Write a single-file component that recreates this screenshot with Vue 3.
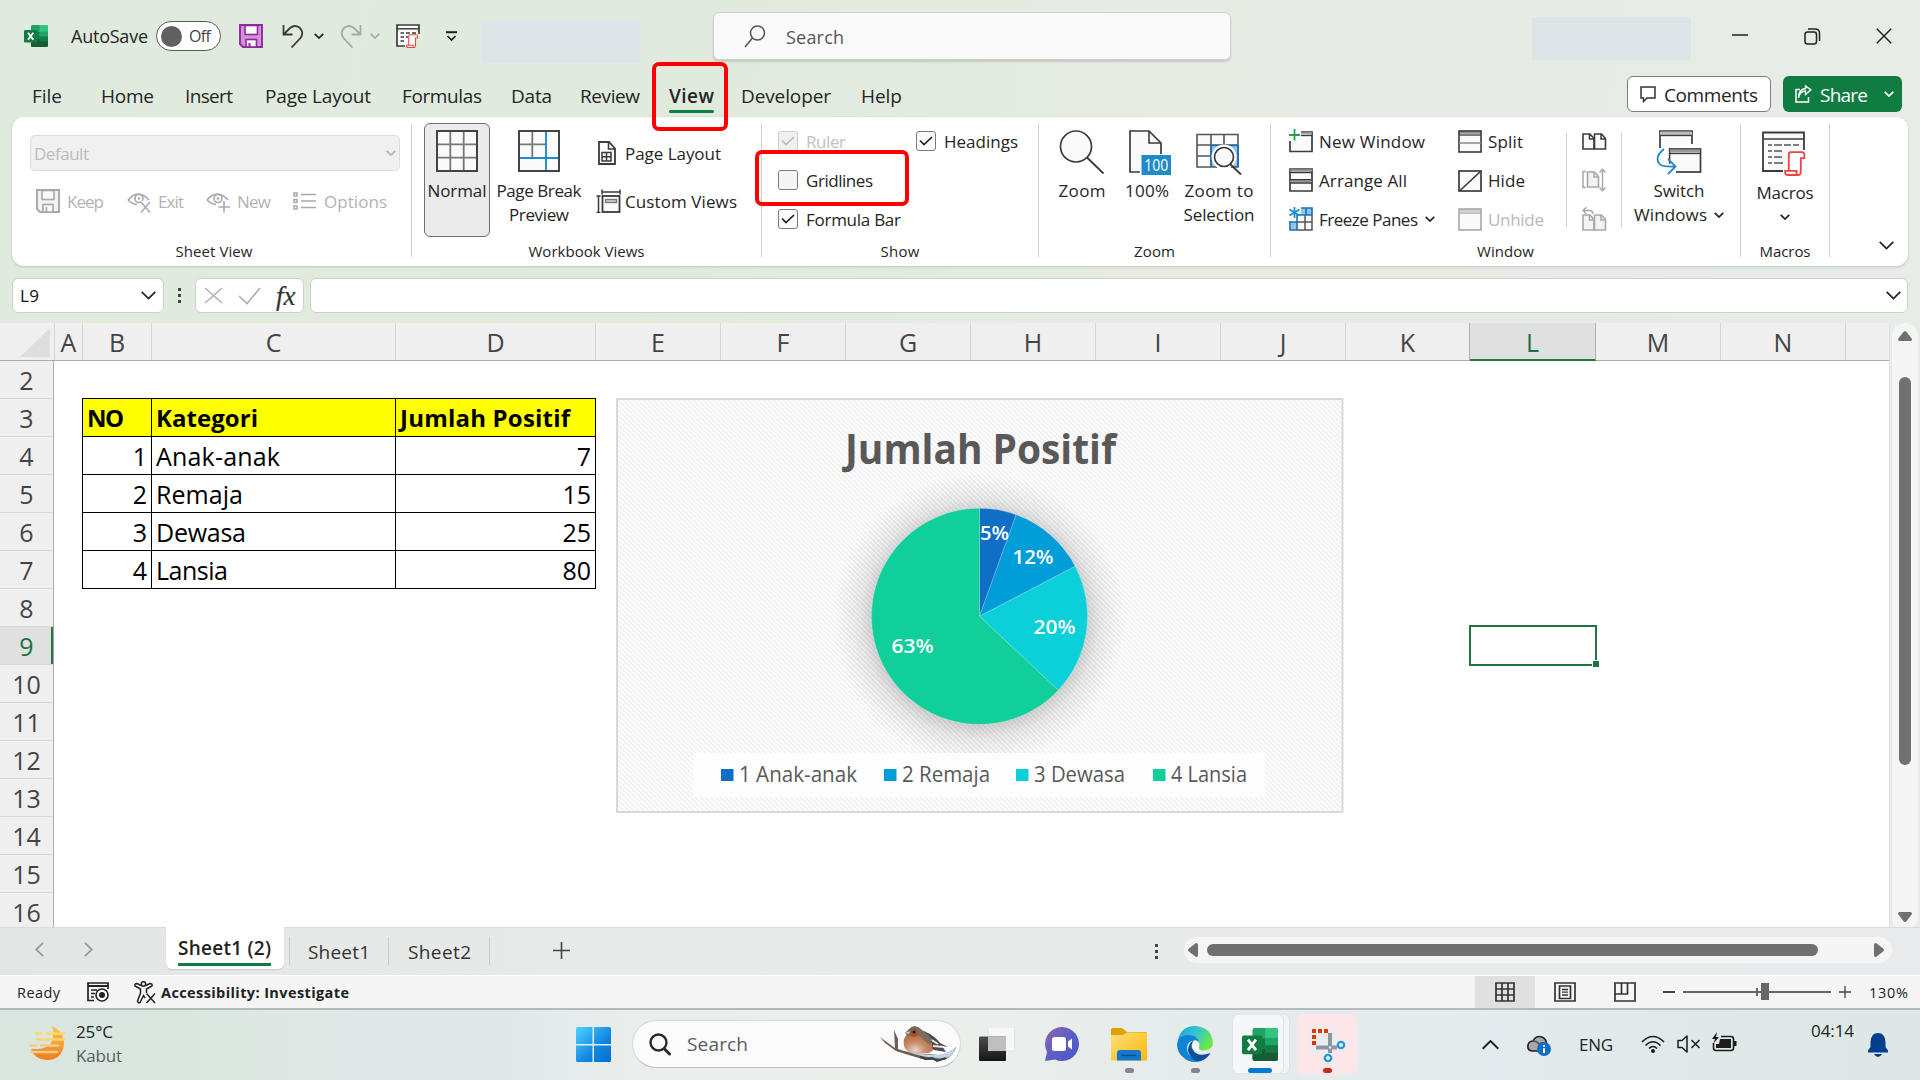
<script setup>
import { h } from 'vue'

// Stretches or tightens a label so that it takes exactly the given width.
const vFit = {
  mounted(el, { value }) {
    el.style.display = 'inline-block'
    el.style.whiteSpace = 'nowrap'
    const natural = el.getBoundingClientRect().width
    const count = Math.max(1, el.textContent.length - 1)
    el.style.letterSpacing = ((value - natural) / count).toFixed(3) + 'px'
    el.style.width = value + 'px'
  }
}

const K = '#3b3b3b'
const G = '#a8a8a8'
const excel = (gradient) => `
  <rect x="7" y="1" width="17" height="22" rx="1.5" fill="#21a366"/>
  <path d="M15.5 1H22.5A1.5 1.5 0 0 1 24 2.500V8H15.500Z" fill="#33c481"/>
  <rect x="7" y="8" width="8.500" height="7" fill="#107c41"/><rect x="15.500" y="7.500" width="8.500" height="7.500" fill="#21a366"/>
  <path d="M7 15H24V21.500A1.500 1.500 0 0 1 22.500 23H8.500A1.500 1.500 0 0 1 7 21.500Z" fill="#185c37"/><rect x="15.500" y="12.500" width="8.500" height="5" fill="#107c41"/>
  <rect x="0" y="6" width="13.500" height="12.500" rx="1.300" fill="${gradient}"/>
  <path d="M4 8.800L9.300 15.800M9.300 8.800L4 15.800" stroke="#fff" stroke-width="1.900"/>`
const scroll = (x, y, s) => `<g transform="translate(${x} ${y}) scale(${s})" fill="#fff" stroke="#f04040" stroke-width="1.500"><path d="M5 1H15Q17 1 17 3.500V6H14V17Q14 20 11.500 20H4V3Q4 1 6 1"/><path d="M1 16.500H10.500V18.500Q10.500 20 11.500 20H3Q1 20 1 18Z"/></g>`
const eye = (c) => `<g fill="none" stroke="${c}" stroke-width="1.600"><path d="M1 11Q11 -1 22 11"/><path d="M1 11Q5 15 10 15.500"/><circle cx="12" cy="9.500" r="4"/></g><circle cx="12" cy="9.500" r="1.300" fill="${c}"/>`
const page = (x, y, c, f) => `<path d="M${x} ${y}H${x + 7}L${x + 11} ${y + 4.500}V${y + 15}H${x}Z" fill="${f}" stroke="${c}" stroke-width="1.600"/><path d="M${x + 6.500} ${y}V${y + 5}H${x + 11}" fill="none" stroke="${c}" stroke-width="1.500"/>`
const win = (c, inner) => `<rect x="1" y="1" width="22" height="21" fill="#fafafa" stroke="${c}" stroke-width="1.600"/><path d="M1 2.500H23" stroke="${c}" stroke-width="2.500" opacity=".55"/><path d="M1 5H23" stroke="${c}" stroke-width="1.300"/>${inner}`

const icons = {
  excel: excel('#107c41'),
  save: '<path d="M1 1H23V23H4L1 20Z" fill="#d490dc" stroke="#8f2a9e" stroke-width="1.900"/><rect x="6" y="1.500" width="12.500" height="9" fill="#fafafa" stroke="#8f2a9e" stroke-width="1.600"/><rect x="7" y="15.500" width="10.500" height="7.500" fill="#fafafa" stroke="#8f2a9e" stroke-width="1.600"/><path d="M10.500 19V23" stroke="#8f2a9e" stroke-width="2"/>',
  undo: `<path d="M1.500 1V10.500H10.500M2 10L8 4Q12.500 .2 17.500 3.500Q22.500 8.500 18.500 14L9.500 23.500" fill="none" stroke="${K}" stroke-width="1.800"/>`,
  redo: '<path d="M21.500 1V10.500H12.500M21 10L15 4Q10.500 .2 5.500 3.500Q.5 8.500 4.500 14L13.500 23.500" fill="none" stroke="#a5aba5" stroke-width="1.800"/>',
  macroSmall: `<path d="M23 10V1H1V22H9" fill="#fafafa" stroke="${K}" stroke-width="1.700"/><path d="M1 4.800H23" stroke="${K}" stroke-width="1.500"/><path d="M4.500 9H8M10 9H14M16 9H20M4.500 13H8M10 13H12M4.500 17H8" stroke="${K}" stroke-width="1.500"/>${scroll(10, 10, 0.68)}`,
  customize: '<path d="M0 1.200H11" stroke="#222" stroke-width="2"/><path d="M1.500 5L5.500 9L9.500 5" fill="none" stroke="#222" stroke-width="1.700"/>',
  search: '<circle cx="13.500" cy="8" r="7" fill="none" stroke="#555" stroke-width="1.500"/><path d="M8.500 13L1 22" stroke="#555" stroke-width="1.600"/>',
  min: '<path d="M0 8H16" stroke="#222" stroke-width="1.500"/>',
  restore: '<rect x="1" y="4" width="11.500" height="12" rx="2.500" fill="none" stroke="#222" stroke-width="1.500"/><path d="M4 1H11Q15.500 1 15.500 5V13" fill="none" stroke="#222" stroke-width="1.500"/>',
  close: '<path d="M.8 .8L15.200 15.200M15.200 .8L.8 15.200" stroke="#222" stroke-width="1.500"/>',
  comment: '<path d="M1 1H15V12H7L3.500 15.500V12H1Z" fill="none" stroke="#333" stroke-width="1.500"/>',
  share: '<path d="M5 4.500H1V17H13.500V12" fill="none" stroke="#fff" stroke-width="1.500"/><path d="M3.500 13Q4.500 6.500 10.500 6V9.500L16 4.800L10.500 1V3.500Q3.500 4.500 3.500 13Z" fill="none" stroke="#fff" stroke-width="1.400"/>',
  keep: `<path d="M1 1H23V23H4L1 20Z" fill="#f3f3f3" stroke="${G}" stroke-width="1.900"/><rect x="6" y="1.500" width="12" height="9" fill="#fafafa" stroke="${G}" stroke-width="1.600"/><rect x="7" y="15.500" width="10" height="7.500" fill="#fafafa" stroke="${G}" stroke-width="1.600"/><path d="M10.500 18V23" stroke="${G}" stroke-width="1.600"/>`,
  exit: eye(G) + '<path d="M14 12H24V24H14Z" fill="#fff"/><path d="M14 13L23 23.500M23 13L14 23.500" stroke="#a8a8a8" stroke-width="1.500"/>',
  newView: eye(G) + '<path d="M15 13H24V24H15Z" fill="#fff"/><path d="M18 12V23.500M12.500 18H24" stroke="#a8a8a8" stroke-width="1.600"/>',
  options: `<g fill="none" stroke="${G}" stroke-width="1.500"><rect x="1" y="4" width="3" height="3"/><rect x="1" y="10.500" width="3" height="3"/><rect x="1" y="17" width="3" height="3"/><path d="M8 5.500H23M8 12H23M8 18.500H23"/></g>`,
  normal: `<rect x="1" y="1" width="40" height="40" fill="#fafafa" stroke="${K}" stroke-width="1.900"/><path d="M14.300 2V40M27.700 2V40M2 14.300H40M2 27.700H40" stroke="#777" stroke-width="1.800"/>`,
  pageBreak: `<rect x="1" y="1" width="40" height="40" fill="#fafafa" stroke="${K}" stroke-width="1.900"/><path d="M14.300 2V27.500M2 14.300H27.500" stroke="#777" stroke-width="1.800"/><path d="M28 2V40M2 28H40" stroke="#1e8bcd" stroke-width="1.900"/>`,
  pageLayout: `<path d="M1 1H11L17 7.500V23H1Z" fill="#fafafa" stroke="${K}" stroke-width="1.800"/><path d="M10.500 1V8H17" fill="none" stroke="${K}" stroke-width="1.500"/><path d="M4 11.500H13V20H4ZM8.500 11.500V20M4 15.700H13" fill="none" stroke="${K}" stroke-width="1.500"/>`,
  customViews: `<rect x="6.500" y="7" width="17" height="16" fill="#fafafa" stroke="${K}" stroke-width="1.800"/><rect x="9.500" y="10.500" width="11" height="3" fill="#ccc" stroke="#777" stroke-width="1.300"/><path d="M6 3H24M6 .5V5.500M24 .5V5.500M2.500 7V23.500M.5 7H4.500M.5 23.500H4.500" stroke="${K}" stroke-width="1.500"/>`,
  zoom: `<circle cx="17" cy="16.500" r="15.500" fill="#fafafa" stroke="${K}" stroke-width="1.700"/><path d="M28 27.500L44.500 43.500" stroke="${K}" stroke-width="1.800"/>`,
  hundred: `<path d="M1 1H20L32 13V42H1Z" fill="#fafafa" stroke="${K}" stroke-width="1.700"/><path d="M20 1V13H32" fill="none" stroke="${K}" stroke-width="1.600"/><rect x="11" y="24" width="32" height="21" fill="#fff"/><rect x="12.500" y="25" width="29.500" height="20" fill="#1e8bcd"/><text x="27.300" y="40.500" text-anchor="middle" font-family="Open Sans, sans-serif" font-size="15.500" textLength="24" lengthAdjust="spacingAndGlyphs" fill="#fff">100</text>`,
  zoomSel: `<path d="M1 2H42V34H1Z" fill="#fafafa"/><rect x="15" y="13" width="27" height="21" fill="#8ec6ee"/><path d="M1 1.500H42V34H1ZM1 12H42M1 23H15M15 2V34M28 2V12" fill="none" stroke="#555" stroke-width="1.600"/><path d="M15 34V12.500H42V34" fill="none" stroke="#1e70b8" stroke-width="1.600"/><circle cx="28" cy="24" r="12.500" fill="#fff"/><circle cx="28" cy="24" r="9.500" fill="#fafafa" stroke="${K}" stroke-width="1.700"/><path d="M34 31L45 41.500" stroke="${K}" stroke-width="1.900"/>`,
  newWin: `<path d="M12 3H23V22.500H1V12" fill="#fafafa" stroke="${K}" stroke-width="1.700"/><path d="M12 4.500H23" stroke="#aaa" stroke-width="2"/><path d="M12 6.500H23" stroke="${K}" stroke-width="1.300"/><path d="M5.500 0V11.500M0 6H11" stroke="#2a9d48" stroke-width="1.800"/>`,
  arrange: `<path d="M1 1H23V23H1Z" fill="#fafafa" stroke="${K}" stroke-width="1.700"/><path d="M1 2.500H23M1 13.500H23" stroke="#999" stroke-width="2"/><path d="M1 4.500H23M1 11.700H23M1 15H23" stroke="${K}" stroke-width="1.400"/>`,
  freeze: `<path d="M1 1H23V23H1Z" fill="#fafafa"/><path d="M12 1H23V8H12ZM1 15H8V23H1Z" fill="#8ec6ee"/><path d="M8 23H23V8M16 8V23M8 15H23" fill="none" stroke="#555" stroke-width="1.500"/><path d="M12 1H23V8H8V23H1V14M17 1V8M1 15H8" fill="none" stroke="#1e70b8" stroke-width="1.600"/><path d="M5.500 0V11M.5 2.500L10.500 8.500M10.500 2.500L.5 8.500" stroke="#1e8bcd" stroke-width="1.700"/>`,
  split: win(K, `<path d="M1 13H23" stroke="#888" stroke-width="1.500"/>`),
  hide: `<rect x="1" y="2" width="22" height="20" fill="#fafafa" stroke="${K}" stroke-width="1.700"/><path d="M2 21.500L22.500 2.500" stroke="${K}" stroke-width="1.700"/>`,
  unhide: win(G, ''),
  sideBySide: `<g transform="translate(0 4)">${page(1, 1, K, '#fafafa')}${page(12.500, 1, K, '#fafafa')}</g>`,
  sync: `<path d="M4 3.500H1V19.500H4" fill="none" stroke="${G}" stroke-width="1.500"/><g transform="translate(4.500 3)">${page(1, 1, G, '#f3f3f3')}</g><path d="M20.500 1.500V22.500M17.500 4.500L20.500 1.200L23.500 4.500M17.500 19.500L20.500 22.800L23.500 19.500" fill="none" stroke="${G}" stroke-width="1.400"/>`,
  reset: `<g transform="translate(0 8)">${page(1, 0, G, '#f3f3f3')}${page(12.500, 0, G, '#f3f3f3')}</g><path d="M4.500 0L1 3.500L4.500 7M1 3.500H7Q11 3.500 11 7" fill="none" stroke="${G}" stroke-width="1.400"/>`,
  switchWin: `<path d="M4 18V1H36V14" fill="#fafafa" stroke="${K}" stroke-width="1.700"/><path d="M4 3.500H36" stroke="#bbb" stroke-width="3.500"/><path d="M4 5.500H36" stroke="${K}" stroke-width="1.300"/><rect x="13.500" y="19" width="31" height="23" fill="#fafafa" stroke="${K}" stroke-width="1.700"/><path d="M14 21H44" stroke="#999" stroke-width="3"/><path d="M14 23.500H44" stroke="${K}" stroke-width="1.300"/><path d="M0 19H12.500V33L20 38V44H0Z" fill="#fff"/><path d="M8 19Q-2 27 3.500 34Q6 37 19 36.500M12 29L19.500 36.500L12 44" fill="none" stroke="#1e8bcd" stroke-width="1.800"/>`,
  macros: `<path d="M42 19V1.500H1V40H21" fill="#fafafa" stroke="${K}" stroke-width="1.800"/><path d="M1 8H42" stroke="${K}" stroke-width="1.600"/><path d="M6 14H10M12 14H20M22 14H29M31 14H37M6 20H10M12 20H20M6 26H10M12 26H20M6 32H10M12 32H21" stroke="#555" stroke-width="1.500"/>${scroll(22, 20, 1.200)}`,
  cancel: '<path d="M1 1L18 16M18 1L1 16" stroke="#b0b0b0" stroke-width="1.500"/>',
  ok: '<path d="M1 9L9 16.500L22 1" fill="none" stroke="#b0b0b0" stroke-width="1.600"/>',
  record: `<path d="M7 18.500H1V1H21V7" fill="none" stroke="#222" stroke-width="1.700"/><path d="M1 4H21" stroke="#222" stroke-width="2"/><path d="M4 8H10M4 11.500H8M4 15H7" stroke="#222" stroke-width="1.300"/><circle cx="15" cy="13" r="6" fill="#fff" stroke="#222" stroke-width="1.600"/><circle cx="15" cy="13" r="3" fill="#222"/>`,
  access: `<g fill="none" stroke="#222" stroke-width="1.500"><circle cx="9.500" cy="3" r="2.200"/><path d="M7 4.500L3 2.500Q.5 2.500 1 5L6.500 8V12L3.500 20Q4 22.500 6 21.500L9.500 14.500L11 17M12 4.500L16 2.500Q18.500 2.500 18 5L12.500 8V12"/><path d="M12.500 12.500L21 22M21 12.500L12.500 22"/></g>`,
  viewNormal: '<path d="M1 1H19V19H1ZM7 1V19M13 1V19M1 7H19M1 13H19" fill="none" stroke="#333" stroke-width="1.700"/>',
  viewPage: '<path d="M1 1H21V19H1ZM5.500 4H16.500V16.500H5.500Z" fill="none" stroke="#333" stroke-width="1.700"/><path d="M8 7.500H14M8 10.200H14M8 13H14" stroke="#333" stroke-width="1.300"/>',
  viewBreak: '<path d="M1 1H21V19H1ZM1 12H13.500V1M7.500 1V12" fill="none" stroke="#333" stroke-width="1.700"/>',
  weather: '<defs><linearGradient id="moon" x1="0" y1="0" x2="0" y2="1"><stop offset="0" stop-color="#f7c65c"/><stop offset="1" stop-color="#ef7d19"/></linearGradient></defs><path d="M23 0Q36 7 35 18Q33 34 18 34Q6 34 2 23Q22 24 24 12Q25 6 23 0Z" fill="url(#moon)"/><g stroke="#fbd768" stroke-width="2.600" stroke-linecap="round"><path d="M7 7.500H12M18 7.500H35M8 13.500H35"/><path d="M1 19.500H7M12 19.500H29M2 26H28" stroke="#f7cb85"/></g>',
  start: '<defs><linearGradient id="win" x1="0" y1="0" x2="1" y2="1"><stop offset="0" stop-color="#4fd3ff"/><stop offset=".6" stop-color="#1287df"/><stop offset="1" stop-color="#0370d0"/></linearGradient></defs><path d="M1.500 0H16.500V17H0V1.500Q0 0 1.500 0ZM18 0H33.500Q35 0 35 1.500V17H18ZM0 18.500H16.500V35H1.500Q0 35 0 33.500ZM18 18.500H35V33.500Q35 35 33.500 35H18Z" fill="url(#win)"/>',
  find: '<circle cx="9.500" cy="9.500" r="8" fill="none" stroke="#2a2a2a" stroke-width="2.400"/><path d="M15.500 16L20.500 21" stroke="#2a2a2a" stroke-width="3" stroke-linecap="round"/>',
  bird: `<defs><radialGradient id="breast" cx=".4" cy=".85" r=".8"><stop offset="0" stop-color="#e9d5c8"/><stop offset=".45" stop-color="#c98a66"/><stop offset="1" stop-color="#a9623d"/></radialGradient></defs>
  <path d="M0 11L8 17L15 22L14 4L18 13V23Q32 28 46 28L60 29Q70 27 76 21Q74 30 64 34L46 34Q28 29 16 25L5 17Z" fill="#6d6154"/>
  <path d="M26 25Q40 29 58 29Q70 27 76 21L73 28Q66 34 58 32Q40 31 26 25Z" fill="#c3d3e4"/>
  <path d="M40 31L46 33L52 32L57 35L66 32" fill="none" stroke="#34414a" stroke-width="2"/>
  <path d="M44 5Q55 10 60 17L68 21L62 20L66 26L54 24L44 18Z" fill="#4b4a4e"/>
  <path d="M50 13L58 18M53 20L64 21" stroke="#e7e9ec" stroke-width="1.800"/>
  <path d="M24 13Q22 25 33 27Q50 29 53 24Q52 10 41 5L29 5Z" fill="url(#breast)"/>
  <path d="M28 6Q31 -1 38 1Q46 6 52 13L50 19Q44 15 40 10Z" fill="#7b6a60"/>
  <path d="M25 7L29 3Q33 -1 37 1L36 6L28 10Z" fill="#70675f"/><circle cx="34" cy="7" r="4" fill="#a1542d"/><circle cx="34" cy="6" r="1.500" fill="#141414"/><path d="M25 7L30 5L29 8Z" fill="#d0ccc8"/>`,
  taskView: '<defs><linearGradient id="tv" x1="0" y1="0" x2="0" y2="1"><stop offset="0" stop-color="#4d4d4d"/><stop offset="1" stop-color="#151515"/></linearGradient></defs><rect x="9" y="0" width="26.500" height="24" rx="1" fill="#f7f7f7" stroke="#dcdcdc" stroke-width=".7"/><rect x="0" y="9.500" width="27" height="24.500" rx="1" fill="url(#tv)"/><rect x="9" y="9.500" width="18" height="14.500" fill="#bfbfbf"/>',
  chat: '<defs><linearGradient id="ch" x1="0" y1="0" x2="1" y2="1"><stop offset="0" stop-color="#9265a8"/><stop offset=".5" stop-color="#5b5fc7"/><stop offset="1" stop-color="#5054c4"/></linearGradient></defs><path d="M17 0A17 17 0 1 1 10 32.500L0 34L2 25A17 17 0 0 1 17 0Z" fill="url(#ch)"/><rect x="7" y="10" width="14" height="14" rx="2.500" fill="#fff"/><path d="M23 14.500L27 11.500V22.500L23 19.500Z" fill="#fff"/>',
  folder: '<defs><linearGradient id="fo" x1="0" y1="0" x2="1" y2="1"><stop offset="0" stop-color="#ffdf78"/><stop offset="1" stop-color="#fab80c"/></linearGradient></defs><path d="M0 1.500Q0 0 1.500 0H11L16 4H34.500Q36 4 36 5.500V10H0Z" fill="#e0a008"/><path d="M0 7H12L16 4.500H36V32.500H0Z" fill="url(#fo)"/><path d="M6 32.500V25Q6 22 9 22H27Q30 22 30 25V32.500Z" fill="#1379ca"/><path d="M10.500 27.500H25.500" stroke="#0a4c8c" stroke-width="1.600"/>',
  edge: '<defs><linearGradient id="e1" x1="0" y1="0" x2="1" y2=".5"><stop offset="0" stop-color="#1ea0dd"/><stop offset=".5" stop-color="#32c3d6"/><stop offset="1" stop-color="#6be849"/></linearGradient></defs><path d="M1 14Q4 0 18 0Q34 1 36 16Q36 24 27 24.500Q20 24.500 22.500 20Q23 14 16 13Z" fill="url(#e1)"/><path d="M0 18Q1 9 11 9Q20 9 22 16Q12 12 10 21Q10 32 22 34Q26 35 24 35Q14 38 7 32Q0 27 0 18Z" fill="#0f84d6"/><path d="M14 16Q8 24 14 31Q18 36 24 35Q31 32 33.500 27Q20 32 15.500 23Q13 19 17 15Z" fill="#0d4f9a"/><path d="M18 14Q22 15 22 19Q20 24 25 25Q20 27 17 23Q13 18 18 14Z" fill="#f2f7f8"/>',
  snip: '<rect x="0" y="0" width="28" height="27" rx="3" fill="#ecebee"/><path d="M5 19V5H19" fill="none" stroke="#d83b01" stroke-width="4" stroke-dasharray="4 2"/><path d="M21 7V27M7 21.500H28" stroke="#8d97a1" stroke-width="4"/><circle cx="21" cy="21.500" r="1.300" fill="#e8e8e8"/><circle cx="32" cy="19" r="3.200" fill="none" stroke="#1b9de2" stroke-width="2.300"/><circle cx="19" cy="32" r="3.200" fill="none" stroke="#1b9de2" stroke-width="2.300"/>',
  cloud: '<path d="M5 16Q0 15 1 10Q2 6 6 6Q9 0 15 2Q19 4 19.500 8L11 16Z" fill="#a9a9a9" stroke="#222" stroke-width="1.600"/><path d="M6 6Q10 6 12 9Q16 7 19 8" fill="none" stroke="#555" stroke-width="1.500"/><circle cx="17" cy="14" r="7" fill="#0c6fc4"/><path d="M17 10V11.800M17 13.200V18" stroke="#fff" stroke-width="2"/>',
  wifi: '<g fill="none" stroke="#1c1c1c" stroke-width="1.600"><path d="M1 7Q12 -4 23 7M4.500 10.500Q12 3 19.500 10.500M8 13.500Q12 9.500 16 13.500"/></g><circle cx="12" cy="16" r="2" fill="#1c1c1c"/>',
  mute: '<path d="M1 5.500H5L10 1V17L5 12.500H1Z" fill="none" stroke="#1c1c1c" stroke-width="1.500" stroke-linejoin="round"/><path d="M14.500 5L22.500 13M22.500 5L14.500 13" stroke="#1c1c1c" stroke-width="1.500"/>',
  battery: '<path d="M9 4.500H19Q21.500 4.500 21.500 7V16Q21.500 18.500 19 18.500H4Q1.500 18.500 1.500 16V11" fill="none" stroke="#1c1c1c" stroke-width="1.600"/><path d="M8 7H19V16H4V12H7Z" fill="#1c1c1c"/><rect x="22" y="9" width="2.500" height="5" fill="#1c1c1c"/><path d="M5 0L0 7H3L1.500 11.500L7 5H4Z" fill="#1c1c1c"/>',
  bell: '<path d="M0 19.500V17.500L2.500 14V9Q3 0 10 0Q17 0 17.500 9V14L20 17.500V19.500Z" fill="#003f8f"/><path d="M6 21H14Q12.500 24 10 24Q7.500 24 6 21Z" fill="#003f8f"/>'
}

const Ico = (p) => h('svg', { width: p.w, height: p.h, viewBox: `0 0 ${p.w} ${p.h}`, innerHTML: icons[p.name] })
Ico.props = ['name', 'w', 'h']

const Chev = (p) => {
  const w = +p.w, t = +p.t || 1.7, ht = w / 2 + 1
  const d = p.up ? `M.7 ${ht - 0.8}L${w / 2} 1L${w - 0.7} ${ht - 0.8}` : `M.7 .8L${w / 2} ${ht - 1}L${w - 0.7} .8`
  return h('svg', { width: w, height: ht, viewBox: `0 0 ${w} ${ht}` }, [h('path', { d, fill: 'none', stroke: p.c || '#222', 'stroke-width': t })])
}
Chev.props = ['w', 'c', 't', 'up']

const tabs = [
  ['File', 32, 30], ['Home', 39, 53], ['Insert', 31, 48], ['Page Layout', 32, 106], ['Formulas', 31, 80], ['Data', 29, 41],
  ['Review', 28, 60], ['View', 29, 45], ['Developer', 27, 90], ['Help', 30, 41]
].map(([label, gap, width]) => ({ label, gap, width }))

const sheetView = [
  { icon: 'keep', label: 'Keep', w: 37, gap: 6 }, { icon: 'exit', label: 'Exit', w: 26, gap: 23 },
  { icon: 'newView', label: 'New', w: 34, gap: 22 }, { icon: 'options', label: 'Options', w: 63, gap: 22 }
]

const cols = [
  ['A', 28], ['B', 69], ['C', 244], ['D', 200], ['E', 125], ['F', 125], ['G', 125], ['H', 125], ['I', 125], ['J', 125],
  ['K', 124], ['L', 126], ['M', 125], ['N', 125], ['', 43.500]
]
const rows = [2, 3, 4, 5, 6, 7, 8, 9, 10, 11, 12, 13, 14, 15, 16]
const data = [['1', 'Anak-anak', '7'], ['2', 'Remaja', '15'], ['3', 'Dewasa', '25'], ['4', 'Lansia', '80']]
const nameWidths = [124, 87, 90, 72]

const values = [7, 15, 25, 80]
const colors = ['#0f6fc6', '#009dd9', '#0bd0d9', '#10cf9b']
const total = values.reduce((a, b) => a + b)
let acc = 0
const slices = values.map((v, i) => {
  const a = (acc / total) * 2 * Math.PI
  acc += v
  const b = (acc / total) * 2 * Math.PI
  const pt = (t) => `${(363.5 + 108 * Math.sin(t)).toFixed(2)} ${(218.3 - 108 * Math.cos(t)).toFixed(2)}`
  return { fill: colors[i], d: `M363.5 218.3L${pt(a)}A108 108 0 ${b - a > Math.PI ? 1 : 0} 1 ${pt(b)}Z` }
})
const pct = [['5%', 364, 141.500, 29], ['12%', 396.500, 165.500, 41], ['20%', 417.500, 235.500, 42], ['63%', 275.500, 255, 42]]
const legend = [['1 Anak-anak', 105, 118], ['2 Remaja', 268, 88], ['3 Dewasa', 400, 91], ['4 Lansia', 537, 76]]
</script>

<template>
  <div class="screen">
    <header class="titlebar">
      <Ico class="t-xl" name="excel" w="24" h="24" />
      <span class="t-auto" v-fit="77">AutoSave</span>
      <div class="toggle"><i></i><span v-fit="22">Off</span></div>
      <Ico class="t-save" name="save" w="24" h="24" />
      <Ico class="t-undo" name="undo" w="24" h="24" />
      <Chev class="t-c1" w="10" />
      <Ico class="t-redo" name="redo" w="24" h="24" />
      <Chev class="t-c2" w="10" c="#a5aba5" />
      <Ico class="t-mac" name="macroSmall" w="24" h="24" />
      <Ico class="t-cust" name="customize" w="11" h="11" />
      <div class="blank b1"></div>
      <div class="search"><Ico name="search" w="22" h="23" /><span v-fit="58">Search</span></div>
      <div class="blank b2"></div>
      <Ico class="w-min" name="min" w="16" h="16" />
      <Ico class="w-res" name="restore" w="17" h="17" />
      <Ico class="w-close" name="close" w="16" h="16" />
    </header>

    <nav class="tabs">
      <div v-for="t in tabs" :key="t.label" class="tab" :class="{ on: t.label === 'View' }" :style="{ marginLeft: t.gap + 'px' }">
        <span v-fit="t.width">{{ t.label }}</span>
        <i v-if="t.label === 'View'" class="mark"></i>
      </div>
      <div class="comments"><Ico name="comment" w="16" h="17" /><span v-fit="94">Comments</span></div>
      <div class="share"><Ico name="share" w="17" h="18" /><span v-fit="48">Share</span><Chev w="10" c="#fff" /></div>
    </nav>

    <section class="ribbon">
      <div class="group g1">
        <div class="body">
          <div class="combo"><span v-fit="55">Default</span><Chev w="10" c="#b5b5b5" /></div>
          <div class="sv-row">
            <div v-for="s in sheetView" :key="s.label" class="sv" :style="{ marginLeft: s.gap + 'px' }">
              <Ico :name="s.icon" w="24" h="24" /><span v-fit="s.w">{{ s.label }}</span>
            </div>
          </div>
        </div>
        <div class="cap"><span v-fit="77">Sheet View</span></div>
      </div>
      <i class="sep"></i>
      <div class="group g2">
        <div class="body row">
          <div class="big normal"><Ico name="normal" w="42" h="42" /><span v-fit="59">Normal</span></div>
          <div class="big pb"><Ico name="pageBreak" w="42" h="42" /><span v-fit="85">Page Break</span><span v-fit="60">Preview</span></div>
          <div class="stack2">
            <div><Ico class="pl" name="pageLayout" w="18" h="24" /><span v-fit="96">Page Layout</span></div>
            <div><Ico class="cv" name="customViews" w="25" h="24" /><span v-fit="112">Custom Views</span></div>
          </div>
        </div>
        <div class="cap"><span v-fit="116">Workbook Views</span></div>
      </div>
      <i class="sep"></i>
      <div class="group g3">
        <div class="body checks">
          <div class="chk off"><b><svg width="14" height="10"><path d="M1 4.500L5 8.500L13 1" fill="none" stroke="#bbb" stroke-width="1.700" /></svg></b><span v-fit="40">Ruler</span></div>
          <div class="chk"><b><svg width="14" height="10"><path d="M1 4.500L5 8.500L13 1" fill="none" stroke="#222" stroke-width="1.700" /></svg></b><span v-fit="74">Headings</span></div>
          <div class="chk empty"><b></b><span v-fit="67">Gridlines</span></div>
          <div></div>
          <div class="chk"><b><svg width="14" height="10"><path d="M1 4.500L5 8.500L13 1" fill="none" stroke="#222" stroke-width="1.700" /></svg></b><span v-fit="95">Formula Bar</span></div>
        </div>
        <div class="cap"><span v-fit="39">Show</span></div>
      </div>
      <i class="sep"></i>
      <div class="group g4">
        <div class="body row">
          <div class="big z1"><Ico name="zoom" w="46" h="45" /><span v-fit="47">Zoom</span></div>
          <div class="big z2"><Ico class="hun" name="hundred" w="43" h="45" /><span v-fit="44">100%</span></div>
          <div class="big z3"><Ico name="zoomSel" w="46" h="42" /><span v-fit="69">Zoom to</span><span v-fit="71">Selection</span></div>
        </div>
        <div class="cap"><span v-fit="41">Zoom</span></div>
      </div>
      <i class="sep"></i>
      <div class="group g5">
        <div class="body row">
          <div class="col c1">
            <div><Ico name="newWin" w="24" h="24" /><span v-fit="106">New Window</span></div>
            <div><Ico name="arrange" w="24" h="24" /><span v-fit="88">Arrange All</span></div>
            <div><Ico name="freeze" w="24" h="24" /><span v-fit="99">Freeze Panes</span><Chev class="sc" w="10" /></div>
          </div>
          <div class="col c2">
            <div><Ico name="split" w="24" h="23" /><span v-fit="35">Split</span></div>
            <div><Ico name="hide" w="24" h="23" /><span v-fit="37">Hide</span></div>
            <div class="dim"><Ico name="unhide" w="24" h="23" /><span v-fit="56">Unhide</span></div>
          </div>
          <i class="ssep"></i>
          <div class="col c3">
            <div><Ico name="sideBySide" w="25" h="24" /></div>
            <div><Ico name="sync" w="25" h="24" /></div>
            <div><Ico name="reset" w="25" h="24" /></div>
          </div>
          <i class="ssep after"></i>
          <div class="big sw"><Ico name="switchWin" w="46" h="45" /><span v-fit="51">Switch</span><div class="ln"><span v-fit="73">Windows</span><Chev w="10" /></div></div>
        </div>
        <div class="cap"><span v-fit="57">Window</span></div>
      </div>
      <i class="sep"></i>
      <div class="group g6">
        <div class="body row">
          <div class="big mc"><Ico name="macros" w="46" h="45" /><span v-fit="57">Macros</span><Chev class="mcc" w="10" /></div>
        </div>
        <div class="cap"><span v-fit="51">Macros</span></div>
      </div>
      <i class="sep"></i>
      <Chev class="collapse" w="15" />
    </section>

    <section class="fbar">
      <div class="name"><span v-fit="19">L9</span><Chev w="15" /></div>
      <div class="dots"><i></i><i></i><i></i></div>
      <div class="fx"><Ico name="cancel" w="19" h="17" /><Ico class="ok" name="ok" w="23" h="18" /><em>fx</em></div>
      <div class="formula"><Chev w="15" /></div>
    </section>

    <main class="sheet">
      <div class="grid">
        <div class="colhead">
          <div class="corner"><i></i></div>
          <div v-for="c in cols" :key="c[0]" class="ch" :class="{ sel: c[0] === 'L' }" :style="{ width: c[1] + 'px' }">{{ c[0] }}</div>
        </div>
        <div class="lower">
          <div class="rowhead">
            <div v-for="r in rows" :key="r" class="rh" :class="{ sel: r === 9 }">{{ r }}</div>
          </div>
          <div class="cells">
            <table>
              <tbody>
                <tr class="hd"><td class="k1"><span v-fit="37">NO</span></td><td class="k2"><span v-fit="102">Kategori</span></td><td class="k3"><span v-fit="170">Jumlah Positif</span></td></tr>
                <tr v-for="(d, i) in data" :key="d[0]"><td class="r">{{ d[0] }}</td><td><span v-fit="nameWidths[i]">{{ d[1] }}</span></td><td class="r">{{ d[2] }}</td></tr>
              </tbody>
            </table>
            <svg class="chart" width="728" height="416" viewBox="0 0 728 416">
              <defs>
                <pattern id="stripe" width="5" height="5" patternUnits="userSpaceOnUse">
                  <rect width="5" height="5" fill="#fff" />
                  <path d="M-1 -1L6 6M-1 4L1 6M4 -1L6 1" stroke="#eeeeee" stroke-width="1.500" />
                </pattern>
                <radialGradient id="halo"><stop offset=".7" stop-color="#000" stop-opacity=".2" /><stop offset=".82" stop-color="#000" stop-opacity=".08" /><stop offset="1" stop-color="#000" stop-opacity="0" /></radialGradient>
              </defs>
              <rect x="1" y="1" width="725.500" height="413" fill="url(#stripe)" stroke="#d9d9d9" stroke-width="2" />
              <circle cx="363.500" cy="221" r="146" fill="url(#halo)" />
              <path v-for="s in slices" :key="s.fill" :d="s.d" :fill="s.fill" stroke="#fff" stroke-opacity=".25" stroke-width=".8" />
              <text class="ct" x="229" y="66" textLength="271" lengthAdjust="spacingAndGlyphs">Jumlah Positif</text>
              <text v-for="p in pct" :key="p[0]" class="cp" :x="p[1]" :y="p[2]" :textLength="p[3]" lengthAdjust="spacingAndGlyphs">{{ p[0] }}</text>
              <rect x="77.500" y="355" width="571" height="44" fill="#fff" fill-opacity=".8" />
              <g v-for="(l, i) in legend" :key="l[0]">
                <rect :x="l[1]" y="371" width="12.500" height="12" :fill="colors[i]" />
                <text class="cl" :x="l[1] + 18" y="383.500" :textLength="l[2]" lengthAdjust="spacingAndGlyphs">{{ l[0] }}</text>
              </g>
            </svg>
            <div class="cursor"><i></i></div>
          </div>
        </div>
      </div>
      <div class="vscroll">
        <svg width="14" height="10"><path d="M7 0Q8 0 9 1.500L14 8Q14 10 12.500 10H1.500Q0 10 0 8L5 1.500Q6 0 7 0Z" fill="#707070" /></svg>
        <i></i>
        <svg class="dn" width="14" height="10"><path d="M7 10Q8 10 9 8.500L14 2Q14 0 12.500 0H1.500Q0 0 0 2L5 8.500Q6 10 7 10Z" fill="#707070" /></svg>
      </div>
    </main>

    <section class="sheets">
      <svg class="nav1" width="9" height="15"><path d="M8 .8L1.200 7.500L8 14.200" fill="none" stroke="#999" stroke-width="1.800" /></svg>
      <svg class="nav2" width="9" height="15"><path d="M1 .8L7.800 7.500L1 14.200" fill="none" stroke="#999" stroke-width="1.800" /></svg>
      <div class="st act"><span v-fit="93">Sheet1 (2)</span><i></i></div>
      <i class="ss a"></i>
      <div class="st first"><span v-fit="62">Sheet1</span></div>
      <i class="ss"></i>
      <div class="st second"><span v-fit="63">Sheet2</span></div>
      <i class="ss"></i>
      <svg class="plus" width="17" height="17"><path d="M8.500 0V17M0 8.500H17" stroke="#444" stroke-width="1.600" /></svg>
      <div class="dots"><i></i><i></i><i></i></div>
      <div class="hscroll">
        <svg width="10" height="14"><path d="M0 7Q0 6 1.500 5L8 0Q10 0 10 1.500V12.500Q10 14 8 14L1.500 9Q0 8 0 7Z" fill="#707070" /></svg>
        <i></i>
        <svg class="rt" width="10" height="14"><path d="M10 7Q10 6 8.500 5L2 0Q0 0 0 1.500V12.500Q0 14 2 14L8.500 9Q10 8 10 7Z" fill="#707070" /></svg>
      </div>
    </section>

    <section class="status">
      <span class="rd" v-fit="43">Ready</span>
      <Ico class="rec" name="record" w="22" h="20" />
      <Ico class="acc" name="access" w="22" h="23" />
      <b v-fit="188">Accessibility: Investigate</b>
      <div class="vbtn"><Ico name="viewNormal" w="20" h="20" /></div>
      <Ico class="v2" name="viewPage" w="22" h="20" />
      <Ico class="v3" name="viewBreak" w="22" h="20" />
      <i class="minus"></i>
      <div class="track"><i></i><b></b></div>
      <svg class="zp" width="12" height="12"><path d="M6 0V12M0 6H12" stroke="#444" stroke-width="1.300" /></svg>
      <span class="zv" v-fit="39">130%</span>
    </section>

    <footer class="taskbar">
      <Ico class="wx" name="weather" w="37" h="35" />
      <div class="wt"><span v-fit="37">25°C</span><span v-fit="46" class="g">Kabut</span></div>
      <Ico class="start" name="start" w="35" h="35" />
      <div class="pill"><Ico name="find" w="23" h="23" /><span v-fit="61">Search</span><Ico class="bird" name="bird" w="77" h="37" /></div>
      <Ico class="tv" name="taskView" w="36" h="35" />
      <Ico class="cht" name="chat" w="35" h="35" />
      <div class="app fo"><Ico name="folder" w="36" h="34" /><i></i></div>
      <div class="app ed"><Ico name="edge" w="37" h="36" /><i></i></div>
      <div class="app xl"><svg width="36" height="33" viewBox="0 1 24 22" v-html="icons.excel"></svg><i></i></div>
      <div class="app sn"><Ico name="snip" w="37" h="37" /><i></i></div>
      <Chev class="up" w="17" up="1" t="1.900" />
      <Ico class="cl" name="cloud" w="25" h="22" />
      <span class="eng" v-fit="34">ENG</span>
      <Ico class="wf" name="wifi" w="24" h="18" />
      <Ico class="mu" name="mute" w="24" h="18" />
      <Ico class="ba" name="battery" w="25" h="20" />
      <span class="clock" v-fit="43">04:14</span>
      <Ico class="be" name="bell" w="20" h="24" />
    </footer>

    <div class="callout o1"></div>
    <div class="callout o2"></div>
  </div>
</template>

<style>
body { margin: 0; background: #e6ece4; overflow: hidden; }
</style>

<style scoped>
.screen {
  position: relative; width: 1920px; height: 1080px; overflow: hidden; display: flex; flex-direction: column;
  font-family: "Open Sans", "Noto Sans", sans-serif; font-size: 17px; color: #252525;
  background: linear-gradient(100deg, #e0eade 0%, #e1ebdd 35%, #e6ece4 55%, #e7ece7 100%);
}
.screen * { box-sizing: border-box; }
svg { display: block; flex: none; }
span { flex: none; line-height: 24px; }

.titlebar { height: 72px; flex: none; display: flex; align-items: flex-start; }
.titlebar > * { flex: none; }
.t-xl { margin: 24px 0 0 24px; }
.t-auto { margin: 24px 0 0 23px; font-size: 18px; }
.toggle { margin: 21px 0 0 8px; width: 65px; height: 30px; border: 1.500px solid #5b5b5b; border-radius: 15px; background: #fff; display: flex; align-items: center; }
.toggle i { width: 21px; height: 21px; border-radius: 50%; background: #616161; margin-left: 4px; }
.toggle span { margin-left: 7px; font-size: 16px; color: #444; }
.t-save { margin: 24px 0 0 18px; }
.t-undo { margin: 24px 0 0 19px; }
.t-c1 { margin: 33px 0 0 8px; }
.t-redo { margin: 24px 0 0 15px; }
.t-c2 { margin: 33px 0 0 7px; }
.t-mac { margin: 24px 0 0 16px; }
.t-cust { margin: 31px 0 0 26px; }
.blank { background: #dde5e8; }
.b1 { width: 159px; height: 43px; margin: 20px 0 0 24px; }
.search { width: 518px; height: 48px; margin: 12px 0 0 73px; background: #fafafa; border: 1px solid #cfd3cf; border-radius: 6px; box-shadow: 0 2px 2px rgba(0,0,0,.14); display: flex; align-items: center; padding-left: 30px; }
.search span { margin-left: 20px; font-size: 18px; color: #565656; padding-top: 1px; }
.b2 { width: 159px; height: 43px; margin: 17px 0 0 301px; }
.w-min { margin: 27px 0 0 41px; }
.w-res { margin: 28px 0 0 56px; }
.w-close { margin: 28px 0 0 55px; }

.tabs { height: 45px; flex: none; display: flex; }
.tab { height: 45px; padding-top: 11px; font-size: 19px; }
.tab.on { font-weight: 600; }
.tab span { display: block; }
.mark { display: block; height: 3px; border-radius: 2px; background: #107c41; margin-top: 1px; }
.comments { margin: 4px 0 0 auto; width: 144px; height: 36px; border: 1px solid #7d7d7d; border-radius: 6px; background: #fff; display: flex; align-items: center; padding-left: 12px; font-size: 19px; }
.comments span { margin-left: 8px; padding-top: 1px; }
.share { margin: 4px 18px 0 12px; width: 119px; height: 36px; border-radius: 6px; background: #107c41; color: #fff; display: flex; align-items: center; padding-left: 12px; font-size: 19px; }
.share span { margin-left: 8px; padding-top: 1px; }
.share svg:last-child { margin-left: 16px; }

.ribbon { height: 149px; flex: none; margin: 0 12px; background: #fff; border-radius: 12px; display: flex; box-shadow: 0 1px 3px rgba(0,0,0,.16); }
.group { display: flex; flex-direction: column; flex: none; }
.body { height: 124px; }
.row { display: flex; align-items: flex-start; }
.row > * { flex: none; }
.cap { height: 20px; display: flex; justify-content: center; align-items: center; font-size: 15px; }
.sep { width: 1px; height: 133px; margin-top: 7px; background: #cfcfcf; flex: none; }
.g1 { width: 399px; }
.g1 .cap { padding-left: 5px; }
.g2 { width: 349px; }
.g3 { width: 276px; }
.g4 { width: 231px; }
.g5 { width: 469px; }
.g6 { width: 88px; }
.g1 .body { padding: 18px 0 0 18px; }
.combo { width: 370px; height: 36px; border: 1px solid #dedede; border-radius: 5px; background: #f0f0f0; display: flex; justify-content: space-between; align-items: center; padding: 0 3px 0 3px; color: #bdbdbd; }
.sv-row { display: flex; margin-top: 18px; }
.sv { display: flex; align-items: center; color: #b3b3b3; height: 24px; }
.sv span { margin-left: 7px; }
.combo span, .sv span, .stack2 span, .chk span, .col span { padding-top: 2px; }
.big { display: flex; flex-direction: column; align-items: center; padding-top: 7px; margin-top: 6px; height: 114px; flex: none; }
.big > svg + span { margin-top: 6.500px; }
.normal { width: 66px; margin-left: 12px; background: #ebebeb; border: 1px solid #6e6e6e; border-radius: 6px; padding-top: 6px; }
.pb { width: 84px; margin-left: 7px; }
.stack2 { display: flex; flex-direction: column; margin-left: 15px; padding-top: 12px; }
.stack2 div { height: 48px; display: flex; align-items: center; }
.pl { margin: 0 9px 0 2px; }
.cv { margin-right: 4px; }
.checks { display: grid; grid-template-columns: 138px 120px; grid-auto-rows: 39px; padding: 4.500px 0 0 16px; }
.chk { display: flex; align-items: center; }
.chk b { width: 20px; height: 20px; border: 1.500px solid #7c7c7c; border-radius: 3px; background: #fafafa; display: flex; align-items: center; justify-content: center; margin-right: 8px; }
.chk.off { color: #c2c2c2; }
.chk.off b { border-color: #cfcfcf; background: #f0f0f0; }
.chk.empty b { background: #f5f5f5; }
.z1 { width: 50px; margin-left: 18px; }
.z2 { width: 46px; margin-left: 17px; }
.hun { position: relative; left: 3px; }
.z3 { width: 74px; margin-left: 12px; padding-top: 10px; }
.big.z1 > svg + span, .big.z2 > svg + span, .big.z3 > svg + span, .big.sw > svg + span { margin-top: 3.500px; }
.col { display: grid; grid-auto-rows: 39px; padding-top: 4.500px; }
.col div { display: flex; align-items: center; }
.col span { margin-left: 6px; }
.c1 { width: 169px; margin-left: 18px; }
.c2 { width: 108px; }
.sc { margin-left: 7px; }
.dim { color: #b8b8b8; }
.ssep { width: 1px; height: 94px; background: #cfcfcf; margin-top: 16px; }
.c3 { margin-left: 15px; }
.ssep.after { margin-left: 14px; }
.sw { width: 90px; margin-left: 12px; }
.ln { display: flex; align-items: center; }
.ln svg { margin-left: 7px; }
.mc { width: 60px; margin-left: 14px; padding-top: 8px; }
.big.mc > svg + span { margin-top: 4.500px; }
.mcc { margin-top: 9px; }
.collapse { margin: 124px 0 0 49px; }

.fbar { height: 57px; flex: none; display: flex; padding-top: 12px; }
.fbar > div { height: 35px; display: flex; align-items: center; }
.name, .fx, .formula { background: #fff; border: 1px solid #cdd1cd; border-radius: 6px; }
.name { width: 152px; margin-left: 12px; justify-content: space-between; padding: 0 7px 0 7px; color: #111; }
.name span { padding-top: 1px; }
.fbar .dots, .dots { display: flex; flex-direction: column; justify-content: center; gap: 3px; }
.dots i { width: 3px; height: 3px; background: #444; }
.fbar .dots { margin-left: 14px; width: 3px; }
.fx { width: 109px; margin-left: 14px; padding-left: 8px; }
.fx .ok { margin-left: 15px; }
.fx em { margin-left: 15px; font: italic 27px/30px "Liberation Serif", serif; color: #333; -webkit-text-stroke: .2px #333; }
.formula { width: 1597.500px; margin-left: 6px; justify-content: flex-end; padding-right: 6px; }

.sheet { height: 604px; flex: none; display: flex; }
.grid { width: 1890px; height: 604px; background: #fff; overflow: hidden; border-right: 1px solid #dfe3e3; }
.colhead { display: flex; height: 38px; background: #efefef; border-bottom: 1px solid #ababab; }
.corner { width: 55px; flex: none; display: flex; padding: 5px 0 0 20px; background: #efefef; border-right: 1px solid #d5d5d5; }
.corner i { width: 30px; height: 29px; background: #dedede; clip-path: polygon(100% 0, 100% 100%, 0 100%); }
.ch { flex: none; text-align: center; font: 25px/39px "Open Sans", sans-serif; color: #444; border-right: 1px solid #d5d5d5; }
.ch.sel { background: #e0e0e0; color: #1e7145; border-bottom: 2px solid #1f7a45; height: 38px; border-right-color: #b0b0b0; box-shadow: -1px 0 #b0b0b0; }
.lower { display: flex; }
.rowhead { width: 54px; flex: none; height: 566px; background: #efefef; border-right: 1px solid #ababab; }
.rh { height: 38.030px; border-bottom: 1px solid #d8d8d8; text-align: center; font: 25px/38px "Open Sans", sans-serif; color: #444; }
.rh:last-child { height: 33px; padding-top: 5px; line-height: 28px; border-bottom: none; }
.rh.sel { background: #e0e0e0; color: #1e7145; box-shadow: inset -2px 0 #1f7a45; }
.cells { position: relative; flex: 1; padding: 37px 0 0 28px; }
table { border-collapse: collapse; table-layout: fixed; width: 514px; font: 25px/36px "Open Sans", sans-serif; color: #000; }
td { height: 38px; padding: 1px 4px 0 4px; border: 1px solid #000; }
td span { line-height: 36px; vertical-align: top; }
.k1 { width: 69px; }
.k2 { width: 244px; }
.hd td { background: #ff0; font-weight: 700; font-size: 24px; }
.r { text-align: right; }
.chart { position: absolute; left: 562px; top: 37px; }
.ct { font: 700 41px "Open Sans", sans-serif; fill: #595959; }
.cp { font: 600 20.500px "Open Sans", sans-serif; fill: #fff; }
.chart .cl { font: 21px "Open Sans", sans-serif; fill: #595959; }
.cursor { position: absolute; left: 1415px; top: 264px; width: 128px; height: 41px; border: 2px solid #217346; }
.cursor i { position: absolute; right: -3.500px; bottom: -3px; width: 7px; height: 7px; background: #217346; border: solid #fff; border-width: 1px 0 0 1px; }
.vscroll { width: 26px; height: 607px; margin-left: 2px; border-radius: 13px; background: #f5f5f5; display: flex; flex-direction: column; align-items: center; padding-top: 8px; }
.vscroll i { width: 12px; height: 388px; border-radius: 6px; background: #707070; margin-top: 36px; }
.dn { margin-top: 147px; }

.sheets { height: 48px; flex: none; display: flex; align-items: flex-start; background: linear-gradient(90deg, #e4e6e5, #e8eaea 30%, #e9eaeb); border-top: 1px solid #d9dcdb; }
.sheets > * { flex: none; }
.nav1 { margin: 14px 0 0 35px; }
.nav2 { margin: 14px 0 0 40px; }
.st { font-size: 19px; color: #333; }
.act { width: 118px; height: 42px; margin: -1px 0 0 73px; background: #fff; border-radius: 0 0 6px 6px; padding: 8px 0 0 12px; font-weight: 600; color: #222; box-shadow: 0 1px 1px rgba(0,0,0,.12); }
.act i { display: block; width: 93px; height: 3px; background: #107c41; margin-top: 2px; }
.ss { width: 1px; height: 28px; background: #cbcdcd; margin-top: 9px; }
.ss.a { margin-left: 5px; }
.first { padding: 13px 18px 0 18px; }
.second { padding: 13px 18px 0 19px; }
.first, .second { line-height: 22px; }
.first span, .second span { line-height: 22px; }
.plus { margin: 14px 0 0 63px; }
.sheets .dots { margin: 15px 0 0 585px; height: 16px; width: 4px; }
.hscroll { width: 708px; height: 26px; margin: 9px 0 0 25px; border-radius: 13px; background: #f5f5f5; display: flex; align-items: center; padding-left: 4px; }
.hscroll i { width: 611px; height: 12px; border-radius: 6px; background: #707070; margin-left: 9px; }
.rt { margin-left: 56px; }

.status { height: 35px; flex: none; background: #f5f5f5; border-top: 1px solid #fff; border-bottom: 2px solid #b4babb; display: flex; align-items: center; font-size: 14.500px; color: #222; }
.status > * { flex: none; }
.rd { margin-left: 17px; }
.rec { margin-left: 27px; }
.acc { margin-left: 25px; }
.status span, .status > b { padding-top: 1px; }
.status > b { margin-left: 5px; line-height: 24px; }
.vbtn { width: 60px; height: 32px; margin-left: 1126px; background: #e0e0e0; display: flex; align-items: center; justify-content: center; }
.v2 { margin-left: 19px; }
.v3 { margin-left: 38px; }
.minus { width: 12px; height: 1.500px; background: #444; margin-left: 27px; }
.track { position: relative; width: 148px; height: 2px; background: #666; margin-left: 8px; }
.track i { position: absolute; left: 73px; top: -3px; width: 2px; height: 8px; background: #666; }
.track b { position: absolute; left: 78px; top: -8px; width: 8px; height: 17px; background: #666; }
.zp { margin-left: 8px; }
.zv { margin-left: 18px; }

.taskbar { height: 70px; flex: none; display: flex; align-items: flex-start; background: linear-gradient(90deg, #d9e5df 0%, #dae7df 10%, #e2e8e9 20%, #e2e8ea 26%, #e9eeec 33%, #ebefec 50%, #e5ebeb 62%, #e4ebee 78%, #dfe8e7 92%, #dde7e5 100%); font-size: 17px; }
.taskbar > * { flex: none; }
.wx { margin: 16px 0 0 29px; }
.wt { margin: 10px 0 0 10px; width: 49px; display: flex; flex-direction: column; align-items: flex-start; }
.wt .g { color: #5d5d5d; }
.start { margin: 17px 0 0 451px; }
.pill { width: 329px; height: 48px; margin: 10px 0 0 21px; border-radius: 24px; background: #fafbfa; border: 1.500px solid #d5d9d8; border-bottom-color: #bbbfbe; display: flex; align-items: center; padding-left: 16px; }
.pill span { margin-left: 15px; font-size: 19px; color: #5c5c5c; }
.bird { margin-left: 132px; }
.tv { margin: 17px 0 0 18px; }
.cht { margin: 17px 0 0 30px; }
.app { width: 60px; height: 60px; margin-top: 4px; display: flex; flex-direction: column; align-items: center; padding-top: 13px; }
.app i { width: 9px; height: 5px; border-radius: 2.500px; background: #838787; margin-top: auto; margin-bottom: 1px; }
.fo { margin-left: 19px; padding-top: 14px; }
.ed { margin-left: 6px; padding-top: 12px; }
.xl { width: 52px; margin-left: 7px; padding-left: 3px; background: #f5f7f8; border: 1px solid #dfe3e4; border-radius: 6px; box-shadow: 6px 0 0 -1px #f1f4f5, 6px 0 0 0 #dfe3e4; }
.xl i { width: 24px; background: #0b78d4; margin-bottom: 0; }
.sn { margin-left: 13px; background: #fce6e8; border-radius: 7px; padding-top: 12px; }
.sn i { background: #c42b1c; }
.up { margin: 30px 0 0 125px; }
.taskbar .cl { margin: 25px 0 0 28px; }
.eng { margin: 23px 0 0 27px; }
.wf { margin: 25px 0 0 28px; }
.mu { margin: 25px 0 0 12px; }
.ba { margin: 22px 0 0 11px; }
.clock { margin: 9px 0 0 74px; }
.be { margin: 23px 0 0 14px; }

.callout { position: absolute; border: 4px solid #fe0000; border-radius: 7px; }
.o1 { left: 652px; top: 62px; width: 76px; height: 69px; }
.o2 { left: 755px; top: 150px; width: 154px; height: 56px; }
</style>
